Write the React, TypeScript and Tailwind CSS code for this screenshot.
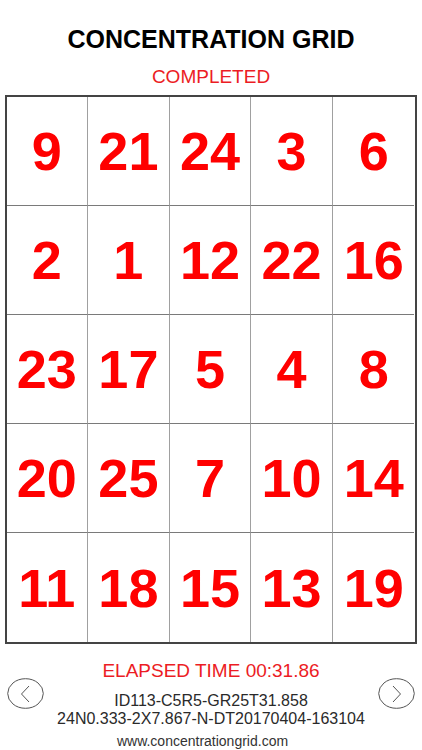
import React from "react";

const grid: number[][] = [
  [9, 21, 24, 3, 6],
  [2, 1, 12, 22, 16],
  [23, 17, 5, 4, 8],
  [20, 25, 7, 10, 14],
  [11, 18, 15, 13, 19],
];

const NavButton: React.FC<{ dir: "left" | "right" }> = ({ dir }) => (
  <button className="mt-[17px] h-[31px] w-[37px] shrink-0">
    <svg viewBox="0 0 37 31" width="37" height="31">
      <ellipse cx="18.5" cy="15.5" rx="17.8" ry="14.8" fill="none" stroke="#555" strokeWidth="1" />
      <path
        d={dir === "left" ? "M22 8 L14.5 16 L22 24" : "M15 8 L22.5 16 L15 24"}
        fill="none"
        stroke="#555"
        strokeWidth="1"
      />
    </svg>
  </button>
);

const App: React.FC = () => {
  return (
    <div className="flex h-[750px] w-[422px] flex-col items-center overflow-hidden bg-white pt-[27px] font-['Liberation_Sans',Arial,sans-serif]">
      <h1 className="text-[25px] font-bold leading-[25px] text-black">CONCENTRATION GRID</h1>
      <p className="mt-[15px] text-[19px] leading-[19px] text-[#ec1c24]">COMPLETED</p>

      <div className="ml-[-1px] mt-[9px] grid h-[549px] w-[412px] grid-cols-5 grid-rows-5 border-2 border-[#444]">
        {grid.map((row, r) =>
          row.map((n, c) => (
            <div
              key={`${r}-${c}`}
              className={`flex items-center justify-center ${
                c < 4 ? "border-r-[1.5px] border-r-[#a0a0a0]" : ""
              } ${r < 4 ? "border-b border-b-[#7a7a7a]" : ""}`}
            >
              <span className="text-[54px] font-bold leading-none text-[#ff0000]">{n}</span>
            </div>
          ))
        )}
      </div>

      <div className="mt-[17px] flex w-full items-start justify-between px-[7px]">
        <NavButton dir="left" />
        <div className="flex flex-1 flex-col items-center">
          <p className="text-[19px] leading-[19px] text-[#ec1c24]">ELAPSED TIME 00:31.86</p>
          <p className="mt-[12px] text-center text-[16px] leading-[18px] text-[#2a2a2a]">
            ID113-C5R5-GR25T31.858
            <br />
            24N0.333-2X7.867-N-DT20170404-163104
          </p>
          <p className="mr-[17px] mt-[5px] text-[14px] leading-[16px] text-[#333]">www.concentrationgrid.com</p>
        </div>
        <NavButton dir="right" />
      </div>
    </div>
  );
};

export default App;
